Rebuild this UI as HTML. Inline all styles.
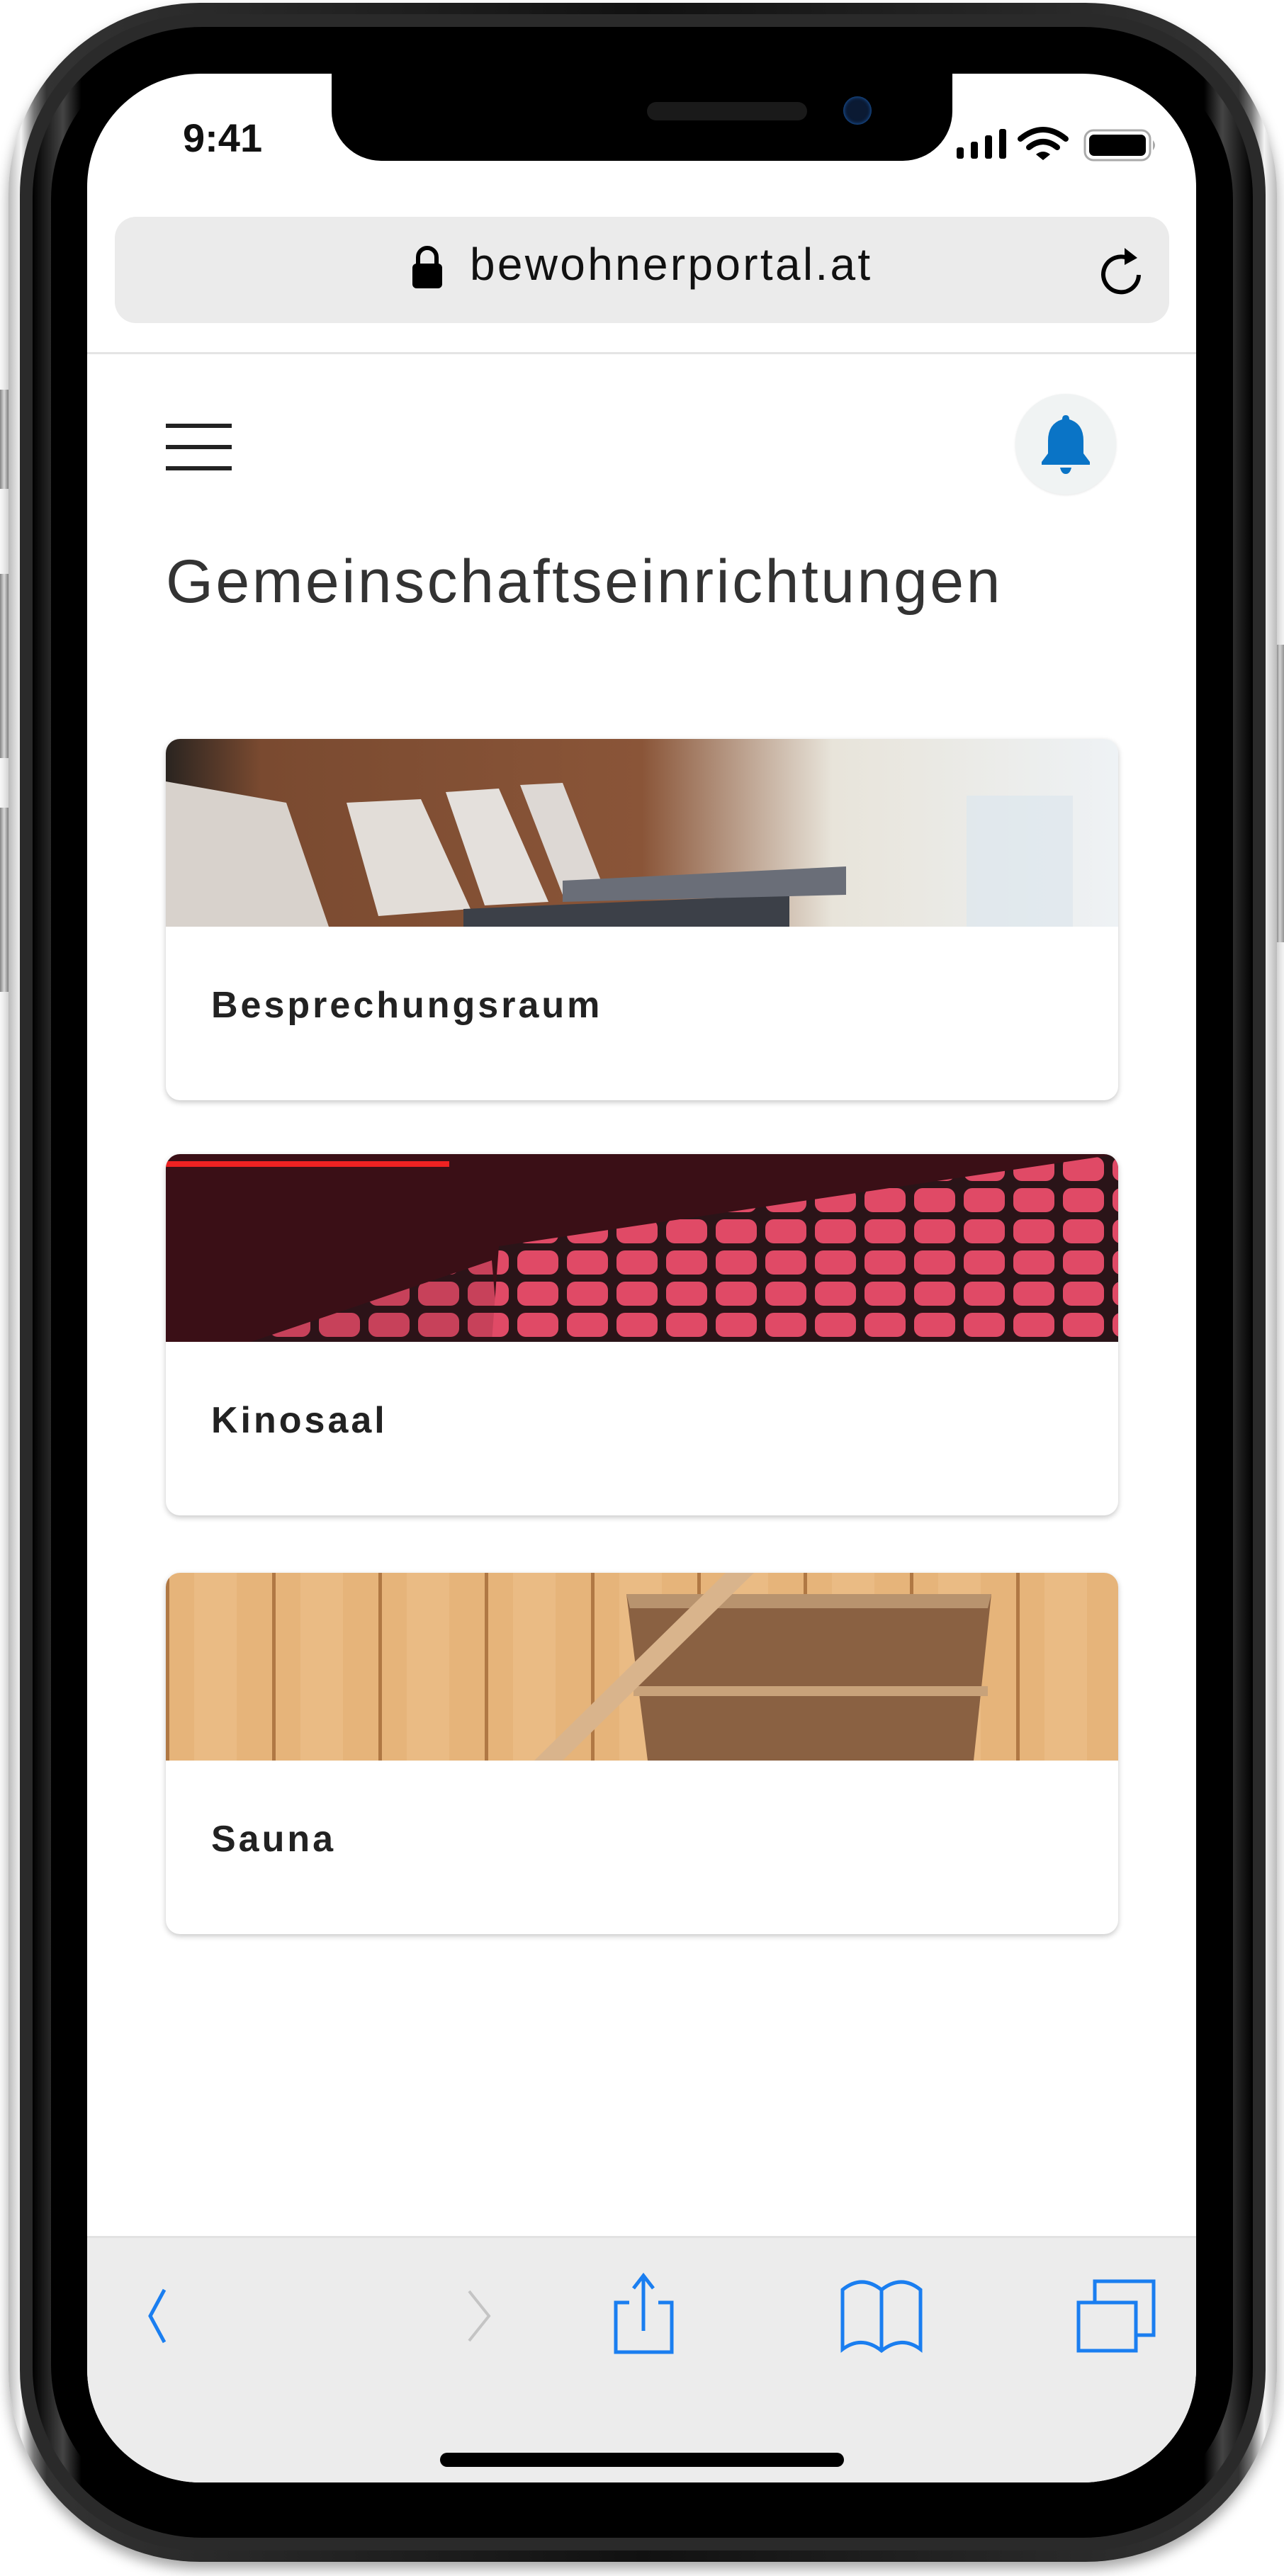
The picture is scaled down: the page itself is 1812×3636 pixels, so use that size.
<!DOCTYPE html>
<html><head><meta charset="utf-8"><style>
*{margin:0;padding:0;box-sizing:border-box}
body{width:1812px;height:3636px;background:#fff;position:relative;overflow:hidden;font-family:"Liberation Sans",sans-serif}
.abs{position:absolute}
.frame{left:12px;top:4px;width:1790px;height:3612px;border-radius:270px;background:linear-gradient(90deg,#bbb,#f4f4f4 1%,#777 2%,#333 3%,#111 50%,#333 97%,#777 98%,#f4f4f4 99%,#bbb);box-shadow:0 10px 18px rgba(0,0,0,.35)}
.f2{left:28px;top:20px;width:1758px;height:3580px;border-radius:255px;background:#2a2a2a}
.f3{left:46px;top:38px;width:1722px;height:3544px;border-radius:240px;background:linear-gradient(90deg,#000,#444 2.5%,#000 4%,#000 96%,#444 97.5%,#000)}
.f4{left:72px;top:62px;width:1668px;height:3496px;border-radius:220px;background:#000}
.screen{left:123px;top:104px;width:1565px;height:3400px;border-radius:160px;background:#fff;overflow:hidden}
.notch{left:345px;top:-10px;width:876px;height:133px;background:#000;border-radius:0 0 70px 70px}
.btn{background:linear-gradient(90deg,#888,#eee,#999);width:12px;left:0}
.card{position:absolute;left:111px;width:1344px;height:510px;border-radius:20px;background:#fff;box-shadow:0 3px 8px rgba(0,0,0,.22);overflow:hidden}
.card svg{display:block}
.card .lbl{position:absolute;left:64px;top:346px;font-size:52px;font-weight:bold;letter-spacing:4px;color:#222}
</style></head><body>
<div class="abs btn" style="top:550px;height:140px"></div>
<div class="abs btn" style="top:810px;height:260px"></div>
<div class="abs btn" style="top:1140px;height:260px"></div>
<div class="abs btn" style="left:1800px;top:910px;height:420px"></div>
<div class="abs frame"></div>
<div class="abs f2"></div>
<div class="abs f3"></div>
<div class="abs f4"></div>
<div class="abs screen">
  <div class="abs notch">
    <div class="abs" style="left:445px;top:50px;width:226px;height:26px;border-radius:13px;background:#1a1a1a"></div>
    <div class="abs" style="left:722px;top:42px;width:40px;height:40px;border-radius:20px;background:#0b1a33;box-shadow:inset 0 0 6px #1f6ac4"></div>
  </div>
  <div class="abs" style="left:135px;top:58px;font-size:56px;font-weight:bold;color:#111">9:41</div>
  <svg class="abs" style="left:1225px;top:72px" width="290" height="56" viewBox="0 0 290 56">
    <rect x="2" y="32" width="10" height="16" rx="3"/><rect x="22" y="24" width="10" height="24" rx="3"/><rect x="42" y="15" width="10" height="33" rx="3"/><rect x="62" y="6" width="10" height="42" rx="3"/>
    <path d="M92 20 Q124 -6 156 20" stroke="#000" stroke-width="8" fill="none" stroke-linecap="round"/>
    <path d="M104 32 Q124 16 144 32" stroke="#000" stroke-width="8" fill="none" stroke-linecap="round"/>
    <path d="M114 42 L124 50 L134 42 Q124 34 114 42Z"/>
    <rect x="183" y="8" width="92" height="42" rx="12" fill="none" stroke="#aaa" stroke-width="3"/>
    <rect x="189" y="14" width="80" height="30" rx="7"/>
    <path d="M279 22 q6 7 0 14z" fill="#aaa"/>
  </svg>
  <div class="abs" style="left:39px;top:202px;width:1488px;height:150px;border-radius:30px;background:#ebebeb"></div>
  <svg class="abs" style="left:455px;top:243px" width="50" height="62" viewBox="0 0 50 62"><path d="M12 26 V16 a13 13 0 0 1 26 0 V26" fill="none" stroke="#000" stroke-width="6"/><rect x="4" y="25" width="42" height="35" rx="6"/></svg>
  <div class="abs" style="left:540px;top:232px;font-size:64px;color:#111;letter-spacing:3.3px">bewohnerportal.at</div>
  <svg class="abs" style="left:1420px;top:240px" width="80" height="80" viewBox="0 0 80 80"><path d="M52 22 A25 25 0 1 0 64 44" fill="none" stroke="#000" stroke-width="6"/><path d="M44 6 L62 20 L44 30Z"/></svg>
  <div class="abs" style="left:0;top:393px;width:1565px;height:3px;background:#e4e4e4"></div>
  <div class="abs" style="left:111px;top:494px;width:93px;height:6px;background:#222"></div>
  <div class="abs" style="left:111px;top:524px;width:93px;height:6px;background:#222"></div>
  <div class="abs" style="left:111px;top:554px;width:93px;height:6px;background:#222"></div>
  <div class="abs" style="left:1310px;top:452px;width:142px;height:142px;border-radius:71px;background:#f0f3f3;box-shadow:0 1px 3px rgba(0,0,0,.1)"></div>
  <svg class="abs" style="left:1345px;top:480px" width="72" height="86" viewBox="0 0 72 86"><path d="M36 2 q5 0 5 6 q20 6 20 30 v18 l9 12 v4 h-68 v-4 l9-12 v-18 q0-24 20-30 q0-6 5-6z" fill="#0a74c6"/><path d="M28 76 h16 q-2 9-8 9 q-6 0-8-9z" fill="#0a74c6"/></svg>
  <div class="abs" style="left:111px;top:668px;font-size:86px;color:#333;letter-spacing:3.5px">Gemeinschaftseinrichtungen</div>

  <div class="card" style="top:939px">
    <svg width="1344" height="265" viewBox="0 0 1344 265">
      <defs><linearGradient id="g1" x1="0" x2="1"><stop offset="0" stop-color="#2a2420"/><stop offset=".1" stop-color="#7a4a30"/><stop offset=".5" stop-color="#8a5538"/><stop offset=".7" stop-color="#e8e4da"/><stop offset="1" stop-color="#eef2f5"/></linearGradient></defs>
      <rect width="1344" height="265" fill="url(#g1)"/>
      <path d="M0 60 L170 90 L230 265 L0 265Z" fill="#d8d2cc"/>
      <path d="M255 90 L360 85 L430 240 L300 250Z" fill="#e2ddd8"/>
      <path d="M395 75 L470 70 L540 230 L450 235Z" fill="#e4e0dc"/>
      <path d="M500 65 L560 62 L620 215 L560 220Z" fill="#ddd8d4"/>
      <path d="M420 240 L880 220 L880 265 L420 265Z" fill="#3c4048"/>
      <path d="M560 200 L960 180 L960 220 L560 230Z" fill="#6a6e78"/>
      <rect x="1130" y="80" width="150" height="185" fill="#dfe7ee" opacity=".8"/>
    </svg>
    <div class="lbl">Besprechungsraum</div>
  </div>
  <div class="card" style="top:1525px">
    <svg width="1344" height="265" viewBox="0 0 1344 265">
      <defs><pattern id="seat" width="70" height="44" patternUnits="userSpaceOnUse"><rect width="70" height="44" fill="#2a1418"/><rect x="6" y="4" width="58" height="34" rx="12" fill="#e04a66"/></pattern></defs>
      <rect width="1344" height="265" fill="#3a0f16"/>
      <rect x="0" y="10" width="400" height="8" fill="#e22"/>
      <path d="M460 265 L470 130 L1344 0 L1344 265Z" fill="url(#seat)"/>
      <path d="M120 265 L460 150 L470 265Z" fill="url(#seat)" opacity=".85"/>
    </svg>
    <div class="lbl">Kinosaal</div>
  </div>
  <div class="card" style="top:2116px">
    <svg width="1344" height="265" viewBox="0 0 1344 265">
      <defs><pattern id="wood" width="150" height="265" patternUnits="userSpaceOnUse"><rect width="150" height="265" fill="#e6b47a"/><rect x="0" width="5" height="265" fill="#b07844"/><rect x="40" width="60" height="265" fill="#edc08a" opacity=".6"/></pattern></defs>
      <rect width="1344" height="265" fill="url(#wood)"/>
      <path d="M650 30 L1165 30 L1140 265 L680 265Z" fill="#8a6142"/>
      <path d="M650 30 L1165 30 L1160 50 L655 50Z" fill="#b8936e"/>
      <rect x="660" y="160" width="500" height="14" fill="#c8a27a"/>
      <path d="M520 265 L790 0 L830 0 L560 265Z" fill="#d9b48c"/>
    </svg>
    <div class="lbl">Sauna</div>
  </div>

  <div class="abs" style="left:0;top:3052px;width:1565px;height:400px;background:#ececec;border-top:3px solid #e2e2e2"></div>
  <div class="abs" style="left:498px;top:3358px;width:570px;height:20px;border-radius:10px;background:#000"></div>
</div>
<svg class="abs" style="left:0;top:3180px" width="1812" height="180" viewBox="0 3180 1812 180">
  <g fill="none" stroke="#1a7ef0" stroke-width="5">
    <path d="M232 3232 L212 3269 L232 3306"/>
    <path d="M888 3250 H869 V3320 H948 V3250 H929"/>
    <path d="M908 3290 V3214 M894 3230 L908 3212 L922 3230"/>
    <path d="M1244 3318 V3232 Q1216 3210 1189 3232 V3316 Q1216 3296 1244 3318 Q1272 3296 1299 3316 V3232 Q1272 3210 1244 3232"/>
    <path d="M1522 3250 H1603 V3318 H1522Z"/>
    <path d="M1545 3250 V3220 H1628 V3296 H1603"/>
  </g>
  <path d="M662 3234 L690 3269 L662 3304" fill="none" stroke="#c4c4c4" stroke-width="4"/>
</svg>
</body></html>
